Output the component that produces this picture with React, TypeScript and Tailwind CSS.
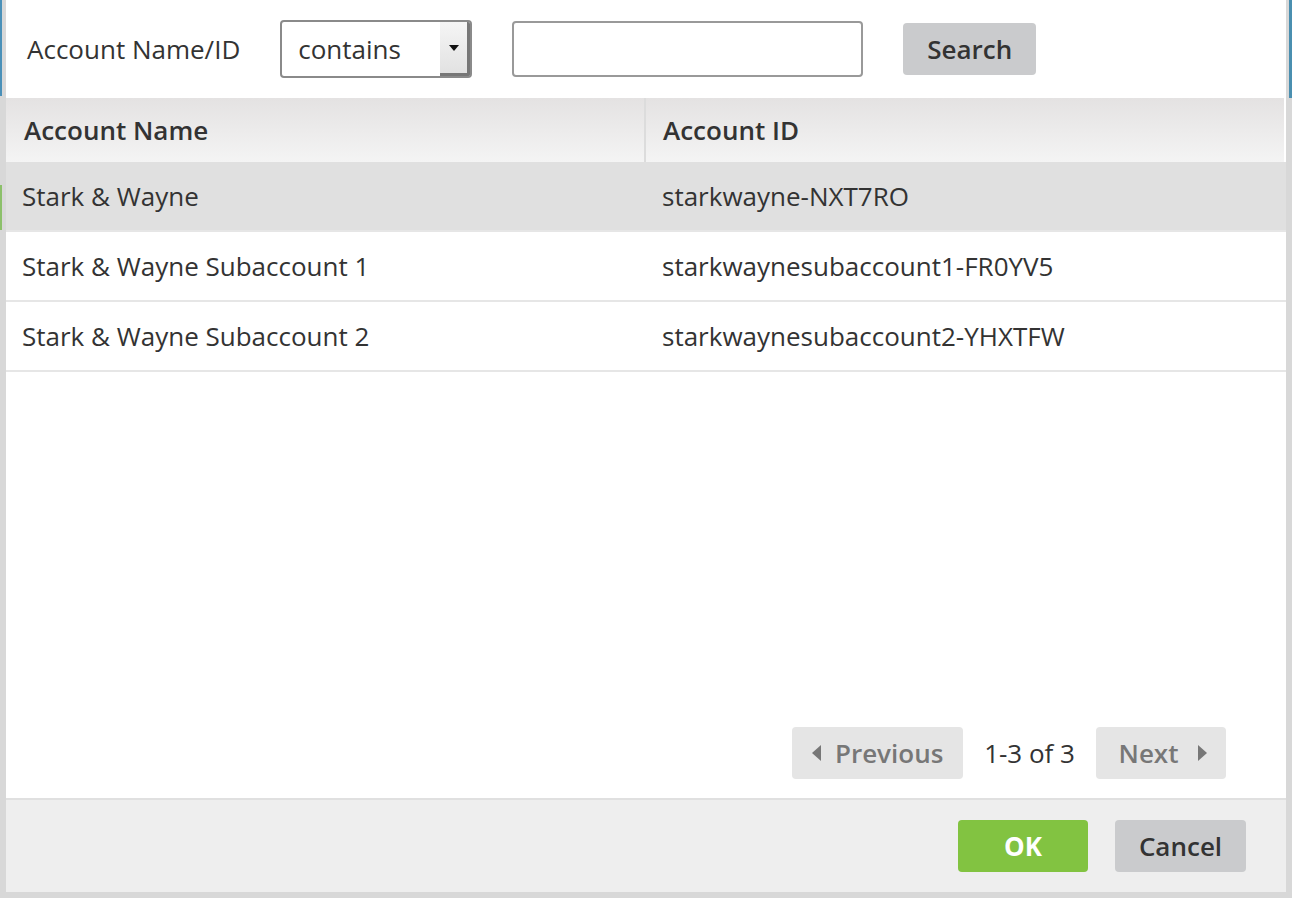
import React from 'react';

const rows = [
  { name: 'Stark & Wayne', id: 'starkwayne-NXT7RO', selected: true },
  { name: 'Stark & Wayne Subaccount 1', id: 'starkwaynesubaccount1-FR0YV5', selected: false },
  { name: 'Stark & Wayne Subaccount 2', id: 'starkwaynesubaccount2-YHXTFW', selected: false },
];

export default function App() {
  return (
    <div
      className="relative w-[1292px] h-[898px] overflow-hidden bg-[#d8d8d8] text-[#333]"
      style={{ fontFamily: '"Open Sans", "Liberation Sans", sans-serif' }}
    >
      {/* page behind the dialog, barely visible */}
      <div className="absolute left-0 top-0 h-[96px] w-[2px] bg-[#4a90b8]" />
      <div className="absolute left-0 top-[185px] h-[45px] w-[2px] bg-[#8cc06a]" />
      <div className="absolute right-0 top-0 h-[98px] w-[3px] bg-[#4a8fb0]" />

      {/* Dialog */}
      <div className="ml-[6px] flex h-[892px] w-[1280px] flex-col bg-white">
        {/* Filter bar */}
        <div className="flex h-[98px] items-center pl-[21px]">
          <span className="text-[26px] leading-none">Account Name/ID</span>
          <div className="ml-[40px] flex h-[58px] w-[192px] items-stretch overflow-hidden rounded-[4px] border-2 border-[#8a8a8a]">
            <span className="flex flex-1 items-center pl-[16px] text-[26px]">contains</span>
            <div className="flex w-[30px] items-center justify-center border-r-[3px] border-b-[3px] border-[#777] bg-gradient-to-b from-[#f5f5f5] to-[#e2e2e2]">
              <span className="h-0 w-0 border-x-[5px] border-t-[6px] border-x-transparent border-t-[#111]" />
            </div>
          </div>
          <div className="ml-[40px] h-[56px] w-[351px] rounded-[4px] border-2 border-[#999]" />
          <button className="ml-[40px] h-[52px] w-[133px] rounded-[4px] bg-[#cacbcd] text-[26px] font-semibold text-[#333]">
            Search
          </button>
        </div>

        {/* Table header */}
        <div className="mr-[2px] flex h-[64px] bg-gradient-to-b from-[#e4e2e2] to-[#f4f4f4]">
          <div className="flex w-[640px] items-center border-r-2 border-[#dcdcdc] pl-[18px] text-[26px] font-semibold">
            Account Name
          </div>
          <div className="flex flex-1 items-center pl-[17px] text-[26px] font-semibold">Account ID</div>
        </div>

        {/* Rows */}
        {rows.map((r) => (
          <div
            key={r.id}
            className={`flex h-[70px] border-b-2 border-[#e6e6e6] text-[26px] ${r.selected ? 'bg-[#e0e0e0]' : 'bg-white'}`}
          >
            <div className="flex w-[640px] items-center pl-[16px]">{r.name}</div>
            <div className="flex flex-1 items-center pl-[16px]">{r.id}</div>
          </div>
        ))}

        {/* Pagination */}
        <div className="flex flex-1 items-end justify-end pb-[19px] pr-[60px]">
          <div className="flex items-center">
            <button className="flex h-[52px] w-[171px] items-center justify-center gap-[14px] rounded-[4px] bg-[#e5e5e5] text-[26px] font-semibold text-[#777]">
              <span className="h-0 w-0 border-y-[8px] border-r-[9px] border-y-transparent border-r-[#777]" />
              Previous
            </button>
            <span className="mx-[21px] text-[26px]">1-3 of 3</span>
            <button className="flex h-[52px] w-[130px] items-center justify-center gap-[20px] rounded-[4px] bg-[#e5e5e5] pl-[4px] text-[26px] font-semibold text-[#777]">
              Next
              <span className="h-0 w-0 border-y-[8px] border-l-[9px] border-y-transparent border-l-[#777]" />
            </button>
          </div>
        </div>

        {/* Footer */}
        <div className="flex h-[94px] items-center justify-end gap-[27px] border-t-2 border-[#e0e0e0] bg-[#eeeeee] pr-[40px]">
          <button className="h-[52px] w-[130px] rounded-[4px] bg-[#82c341] text-[26px] font-bold text-white">OK</button>
          <button className="h-[52px] w-[131px] rounded-[4px] bg-[#cacbcd] text-[26px] font-semibold text-[#333]">
            Cancel
          </button>
        </div>
      </div>
    </div>
  );
}
